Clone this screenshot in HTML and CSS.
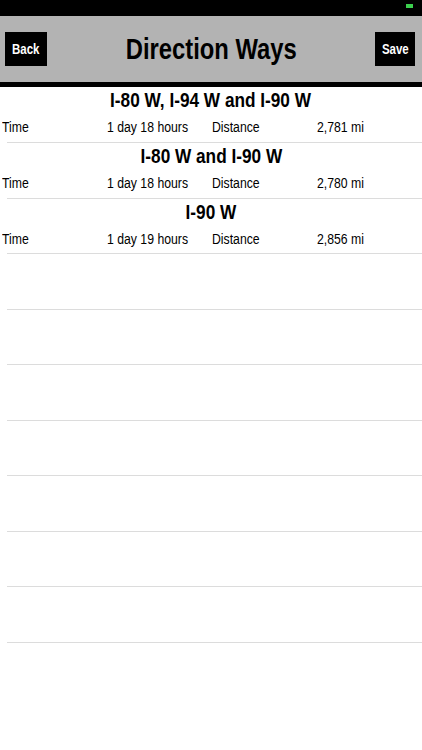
FILE: index.html
```html
<!DOCTYPE html>
<html>
<head>
<meta charset="utf-8">
<link rel="stylesheet" href="styles.css">
</head>
<body>
<div class="status"><span class="battery"></span></div>
<header class="nav">
  <button class="btn btn-back"><span class="nx">Back</span></button>
  <h1 class="title"><span class="nx">Direction Ways</span></h1>
  <button class="btn btn-save"><span class="nx">Save</span></button>
</header>
<ul class="list">
  <li class="cell">
    <div class="route"><span class="nx">I-80 W, I-94 W and I-90 W</span></div>
    <div class="details"><span class="nl">Time</span><span class="nl">1 day 18 hours</span><span class="nl">Distance</span><span class="nl">2,781 mi</span></div>
  </li>
  <li class="cell">
    <div class="route"><span class="nx">I-80 W and I-90 W</span></div>
    <div class="details"><span class="nl">Time</span><span class="nl">1 day 18 hours</span><span class="nl">Distance</span><span class="nl">2,780 mi</span></div>
  </li>
  <li class="cell">
    <div class="route"><span class="nx">I-90 W</span></div>
    <div class="details"><span class="nl">Time</span><span class="nl">1 day 19 hours</span><span class="nl">Distance</span><span class="nl">2,856 mi</span></div>
  </li>
  <li class="cell"></li>
  <li class="cell"></li>
  <li class="cell"></li>
  <li class="cell"></li>
  <li class="cell"></li>
  <li class="cell"></li>
  <li class="cell"></li>
</ul>
</body>
</html>
```
FILE: styles.css
```css
* { box-sizing: border-box; }
html, body { margin: 0; padding: 0; background: #fff; }
body {
  width: 422px;
  font-family: "Liberation Sans", Arial, sans-serif;
  color: #000;
}
.nx {
  display: inline-block;
  white-space: nowrap;
  transform: scaleX(0.82);
  transform-origin: center;
}
.nl {
  display: inline-block;
  white-space: nowrap;
  transform: scaleX(0.79);
  transform-origin: left center;
}
.status {
  height: 16px;
  background: #000;
  position: relative;
}
.battery {
  position: absolute;
  right: 9px;
  top: 4px;
  width: 7px;
  height: 4px;
  background: #3ccf4e;
}
.nav {
  height: 71px;
  background: #b3b3b3;
  border-bottom: 5px solid #000;
  display: flex;
  align-items: center;
  justify-content: space-between;
  padding: 0 7px 0 5px;
}
.btn {
  background: #000;
  color: #fff;
  border: none;
  height: 34px;
  padding: 0;
  font-family: inherit;
  font-weight: bold;
  font-size: 14px;
  display: flex;
  align-items: center;
  justify-content: center;
}
.btn-back { width: 42px; }
.btn-save { width: 40px; }
.title {
  margin: 0;
  font-size: 29px;
  font-weight: bold;
  line-height: 34px;
}
.list {
  list-style: none;
  margin: 0;
  padding: 0;
}
.cell {
  height: 55.56px;
  border-bottom: 1px solid #dcdcdc;
  margin-left: 7px;
}
.cell:first-child { height: 56px; }
.route {
  margin-left: -7px;
  text-align: center;
  font-size: 21px;
  font-weight: bold;
  line-height: 26px;
  padding-top: 0;
}
.details {
  margin-left: -7px;
  margin-top: 5px;
  display: grid;
  grid-template-columns: 105px 105px 105px 107px;
  font-size: 15.5px;
  line-height: 18px;
}
.details span { margin-left: 2px; }
```
